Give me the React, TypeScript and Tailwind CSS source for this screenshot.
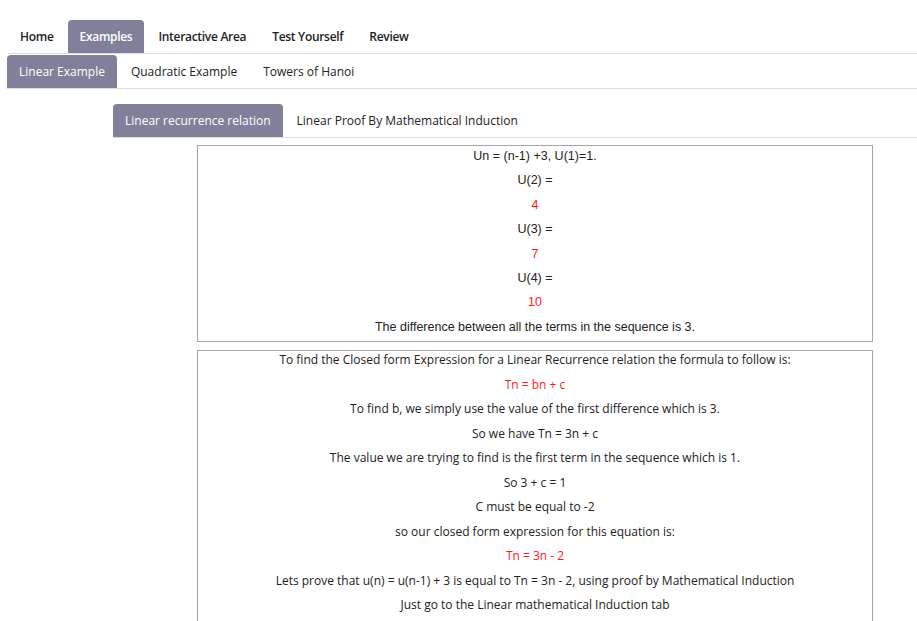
import React from "react";

const mainTabs = ["Home", "Examples", "Interactive Area", "Test Yourself", "Review"];
const exampleTabs = ["Linear Example", "Quadratic Example", "Towers of Hanoi"];
const linearTabs = ["Linear recurrence relation", "Linear Proof By Mathematical Induction"];

type Line = { text: string; red?: boolean };

const recurrence: Line[] = [
  { text: "Un = (n-1) +3, U(1)=1." },
  { text: "U(2) =" },
  { text: "4", red: true },
  { text: "U(3) =" },
  { text: "7", red: true },
  { text: "U(4) =" },
  { text: "10", red: true },
  { text: "The difference between all the terms in the sequence is 3." },
];

const closedForm: Line[] = [
  { text: "To find the Closed form Expression for a Linear Recurrence relation the formula to follow is:" },
  { text: "Tn = bn + c", red: true },
  { text: "To find b, we simply use the value of the first difference which is 3." },
  { text: "So we have Tn = 3n + c" },
  { text: "The value we are trying to find is the first term in the sequence which is 1." },
  { text: "So 3 + c = 1" },
  { text: "C must be equal to -2" },
  { text: "so our closed form expression for this equation is:" },
  { text: "Tn = 3n - 2", red: true },
  { text: "Lets prove that u(n) = u(n-1) + 3 is equal to Tn = 3n - 2, using proof by Mathematical Induction" },
  { text: "Just go to the Linear mathematical Induction tab" },
];

function TabRow({ tabs, active, bold }: { tabs: string[]; active: number; bold?: boolean }) {
  return (
    <ul className="flex gap-[2px] border-b border-[#dddddd]">
      {tabs.map((t, i) => (
        <li
          key={t}
          className={
            "h-[33px] flex items-center px-3 rounded-t-[4px] text-[12px] " +
            (bold ? "font-semibold tracking-[-0.3px] " : "") +
            (i === active ? "bg-[#80809a] text-white" : "text-[#222222]")
          }
        >
          {t}
        </li>
      ))}
    </ul>
  );
}

function Box({ lines, font, gap }: { lines: Line[]; font: string; gap: string }) {
  return (
    <div className={"ml-[190px] w-[676px] border border-[#a6a6a6] text-center " + font}>
      {lines.map((l, i) => (
        <p
          key={i}
          className={"leading-[18px] " + gap + " " + (l.red ? "text-[#ff1a1a]" : "text-[#222222]")}
        >
          {l.text}
        </p>
      ))}
    </div>
  );
}

export default function App() {
  return (
    <div className="min-h-screen bg-white pt-[20px] pl-[7px] font-['Open_Sans',sans-serif]">
      <div className="pl-px">
        <TabRow tabs={mainTabs} active={1} bold />
      </div>
      <div className="mt-[1px]">
        <TabRow tabs={exampleTabs} active={0} />
      </div>
      <div className="ml-[106px] mt-[15px]">
        <TabRow tabs={linearTabs} active={0} />
      </div>
      <div className="mt-[7px] flex flex-col gap-[8px]">
        <Box
          lines={recurrence}
          gap="mb-[6.4px] first:mt-[1px] last:mb-[5.4px]"
          font="text-[12.5px] font-['Liberation_Sans',Arial,sans-serif]"
        />
        <Box
          lines={closedForm}
          gap="mb-[6.5px] last:mb-[30px]"
          font="text-[12px] font-['Open_Sans',sans-serif]"
        />
      </div>
    </div>
  );
}
